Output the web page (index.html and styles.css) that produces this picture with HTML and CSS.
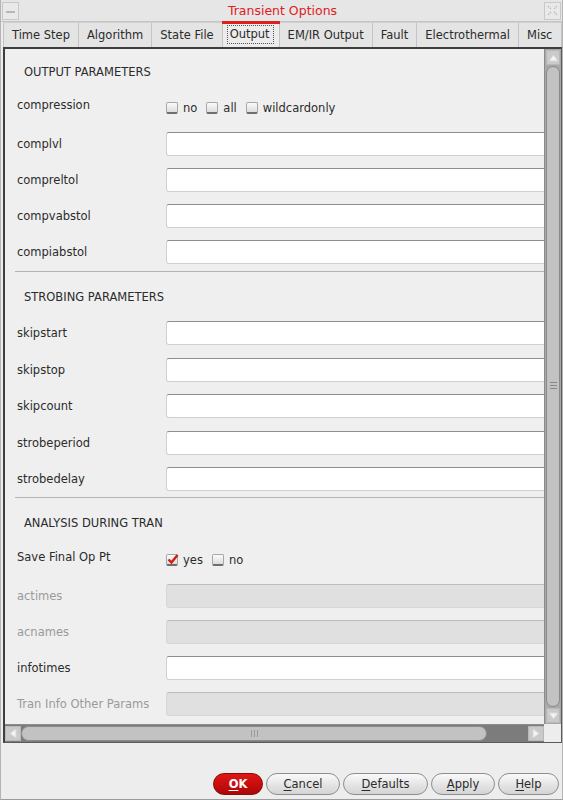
FILE: index.html
```html
<!DOCTYPE html>
<html>
<head>
<meta charset="utf-8">
<link rel="stylesheet" href="styles.css">
</head>
<body>
<div class="win">
  <div class="titlebar">
    <span class="tb-btn tb-min"><span class="dash"></span></span>
    <span class="title">Transient Options</span>
    <span class="tb-btn tb-close">
      <svg width="11" height="11" viewBox="0 0 11 11"><path d="M1 1L4 4M7 7L10 10M10 1L7 4M4 7L1 10" stroke="#b8b8b8" stroke-width="1.3" stroke-dasharray="1.5 1"/></svg>
    </span>
  </div>

  <div class="tabs">
    <div class="tab">Time Step</div>
    <div class="tab">Algorithm</div>
    <div class="tab">State File</div>
    <div class="tab active"><span class="focus">Output</span></div>
    <div class="tab">EM/IR Output</div>
    <div class="tab">Fault</div>
    <div class="tab">Electrothermal</div>
    <div class="tab tab-last">Misc</div>
  </div>

  <div class="panel">
    <div class="viewport">
      <div class="content">
        <section class="sec sec-first">
          <div class="hdr">OUTPUT PARAMETERS</div>
          <div class="rows">
            <div class="row row-check">
              <span class="lbl">compression</span>
              <div class="opts">
                <label class="opt"><span class="cb"></span>no</label>
                <label class="opt"><span class="cb"></span>all</label>
                <label class="opt"><span class="cb"></span>wildcardonly</label>
              </div>
            </div>
            <div class="row"><span class="lbl">complvl</span><span class="field"></span></div>
            <div class="row"><span class="lbl">compreltol</span><span class="field"></span></div>
            <div class="row"><span class="lbl">compvabstol</span><span class="field"></span></div>
            <div class="row"><span class="lbl">compiabstol</span><span class="field"></span></div>
          </div>
        </section>

        <section class="sec sec-strobe">
          <div class="hdr">STROBING PARAMETERS</div>
          <div class="rows">
            <div class="row"><span class="lbl">skipstart</span><span class="field"></span></div>
            <div class="row"><span class="lbl">skipstop</span><span class="field"></span></div>
            <div class="row"><span class="lbl">skipcount</span><span class="field"></span></div>
            <div class="row"><span class="lbl">strobeperiod</span><span class="field"></span></div>
            <div class="row"><span class="lbl">strobedelay</span><span class="field"></span></div>
          </div>
        </section>

        <section class="sec sec-last">
          <div class="hdr">ANALYSIS DURING TRAN</div>
          <div class="rows">
            <div class="row row-check">
              <span class="lbl">Save Final Op Pt</span>
              <div class="opts">
                <label class="opt"><span class="cb checked"><svg width="12" height="11" viewBox="0 0 12 11"><path d="M1.5 5.5L4.5 8.5L10.5 1" fill="none" stroke="#d21a1a" stroke-width="2.4"/></svg></span>yes</label>
                <label class="opt"><span class="cb"></span>no</label>
              </div>
            </div>
            <div class="row"><span class="lbl dis">actimes</span><span class="field field-dis"></span></div>
            <div class="row"><span class="lbl dis">acnames</span><span class="field field-dis"></span></div>
            <div class="row"><span class="lbl">infotimes</span><span class="field"></span></div>
            <div class="row"><span class="lbl dis">Tran Info Other Params</span><span class="field field-dis"></span></div>
          </div>
        </section>
      </div>
    </div>

    <div class="vscroll">
      <span class="arrow arrow-up"><svg width="11" height="8" viewBox="0 0 11 8"><path d="M5.5 1L10 7H1Z" fill="#f4f4f4" stroke="#d8d8d8"/></svg></span>
      <span class="vthumb"><span class="grip-v"></span></span>
      <span class="arrow arrow-down"><svg width="11" height="8" viewBox="0 0 11 8"><path d="M5.5 7L10 1H1Z" fill="#f4f4f4" stroke="#d8d8d8"/></svg></span>
    </div>

    <div class="hscroll">
      <span class="harrow"><svg width="8" height="11" viewBox="0 0 8 11"><path d="M1 5.5L7 1V10Z" fill="#f4f4f4" stroke="#d8d8d8"/></svg></span>
      <span class="hthumb"><span class="grip-h"></span></span>
      <span class="htrack"></span>
      <span class="harrow"><svg width="8" height="11" viewBox="0 0 8 11"><path d="M7 5.5L1 1V10Z" fill="#f4f4f4" stroke="#d8d8d8"/></svg></span>
    </div>
    <div class="corner"></div>
  </div>

  <div class="footer">
    <button class="btn btn-ok"><u>O</u>K</button>
    <button class="btn btn-cancel"><u>C</u>ancel</button>
    <button class="btn btn-defaults"><u>D</u>efaults</button>
    <button class="btn btn-apply"><u>A</u>pply</button>
    <button class="btn btn-help"><u>H</u>elp</button>
  </div>
</div>
</body>
</html>
```

FILE: styles.css
```css
* { box-sizing: border-box; }

html, body {
  margin: 0;
  padding: 0;
  background: #ececec;
}

body {
  font-family: "DejaVu Sans", "Liberation Sans", sans-serif;
  font-size: 11.5px;
  color: #2b2b2b;
}

.win {
  width: 563px;
  height: 800px;
  background: #ededed;
  border-left: 1px solid #b4b4b4;
  border-right: 1px solid #b4b4b4;
  border-bottom: 1px solid #9c9c9c;
  position: relative;
}

/* title bar */
.titlebar {
  height: 22px;
  display: flex;
  align-items: center;
  justify-content: space-between;
  padding: 0 1px 0 1px;
  background: #e6e6e6;
  border-bottom: 1px solid #c4c4c4;
}

.title {
  color: #e0201c;
  font-size: 12.5px;
  line-height: 20px;
  margin-left: 2px;
}

.tb-btn {
  width: 17px;
  height: 18px;
  border: 1px solid #c8c8c8;
  background: #e9e9e9;
  display: flex;
  align-items: center;
  justify-content: center;
}

.dash {
  width: 9px;
  height: 2px;
  background: #b6b6b6;
  margin-top: 2px;
}

/* tabs */
.tabs {
  display: flex;
  height: 25px;
  margin-left: 2px;
}

.tab {
  height: 25px;
  padding: 0 8px;
  display: flex;
  align-items: center;
  background: #e4e4e4;
  border-top: 1px solid #d0d0d0;
  border-left: 1px solid #c4c4c4;
  color: #2b2b2b;
  white-space: nowrap;
}

.tab-last {
  flex: 1;
  border-right: 1px solid #c4c4c4;
}

.tab.active {
  background: #ececec;
  position: relative;
  padding: 0 5px 0 4px;
  border-top: none;
}

.tab.active::before {
  content: "";
  position: absolute;
  left: -1px;
  right: -1px;
  top: -1px;
  height: 3px;
  background: #e0201c;
}

.focus {
  border: 1px dotted #555;
  padding: 1px 3px 1px 2px;
  line-height: 15px;
}

/* panel */
.panel {
  margin-left: 2px;
  width: 559px;
  height: 696px;
  border-left: 2px solid #3e3e3e;
  border-top: 2px solid #3e3e3e;
  border-bottom: 1px solid #5a5a5a;
  border-right: 1px solid #5a5a5a;
  display: grid;
  grid-template-columns: 1fr 17px;
  grid-template-rows: 1fr 18px;
  background: #efefef;
}

.viewport {
  overflow: hidden;
  position: relative;
}

.content {
  padding-left: 12px;
}

.sec {
  border-bottom: 1px solid #b4b4b4;
  margin-left: -2px;
  padding-left: 2px;
}

.sec-last {
  border-bottom: none;
}

.hdr {
  line-height: 16px;
  padding: 17px 0 14px 7px;
  color: #2b2b2b;
}

.sec-first .hdr {
  padding-top: 15px;
  padding-bottom: 13px;
}

.sec-strobe .hdr {
  padding-bottom: 16px;
}

.rows {
  display: flex;
  flex-direction: column;
  gap: 12px;
}

.sec-first .rows { padding-bottom: 7px; }
.sec-strobe .rows { gap: 12.5px; padding-bottom: 6px; }

.row {
  display: flex;
  align-items: center;
  height: 24px;
}

.row-check {
  height: 27px;
  align-items: flex-start;
}

.lbl {
  width: 149px;
  flex: none;
  line-height: 24px;
  white-space: nowrap;
}

.lbl.dis {
  color: #9a9a9a;
}

.field {
  flex: none;
  width: 400px;
  height: 24px;
  background: #ffffff;
  border: 1px solid #cfcfcf;
  border-top-color: #8e8e8e;
  border-radius: 3px;
}

.field-dis {
  background: #e0e0e0;
  border-color: #d6d6d6;
  border-top-color: #bdbdbd;
}

.opts {
  display: flex;
  gap: 9px;
  margin-top: 6px;
  line-height: 18px;
}

.opt {
  display: flex;
  align-items: center;
  gap: 5px;
  color: #2b2b2b;
}

.cb {
  width: 12px;
  height: 12px;
  border: 1px solid #a8a8a8;
  border-bottom: 2px solid #6e6e6e;
  border-radius: 2px;
  background: linear-gradient(#fbfbfb, #dcdcdc);
  display: flex;
  align-items: center;
  justify-content: center;
  position: relative;
}

.cb.checked svg {
  position: absolute;
  left: 0;
  top: -1px;
}

/* scrollbars */
.vscroll {
  background: #a9a9a9;
  border-left: 1px solid #8c8c8c;
  display: flex;
  flex-direction: column;
  padding: 1px;
}

.arrow {
  height: 15px;
  flex: none;
  display: flex;
  align-items: center;
  justify-content: center;
  background: #cacaca;
  border: 1px solid #b8b8b8;
}

.vthumb {
  flex: 1;
  margin: 1px 0;
  background: #c2c2c2;
  border: 1px solid #8a8a8a;
  border-radius: 7px;
  display: flex;
  align-items: center;
  justify-content: center;
}

.grip-v {
  width: 7px;
  height: 7px;
  border-top: 1px solid #888;
  border-bottom: 1px solid #888;
  background: linear-gradient(#888, #888) center / 7px 1px no-repeat;
  margin-top: -2px;
}

.hscroll {
  background: #7c7c7c;
  border-top: 1px solid #8c8c8c;
  display: flex;
  padding: 1px 0;
}

.harrow {
  width: 16px;
  flex: none;
  display: flex;
  align-items: center;
  justify-content: center;
  background: #cacaca;
  border: 1px solid #b8b8b8;
}

.hthumb {
  width: 466px;
  flex: none;
  background: #c2c2c2;
  border: 1px solid #8a8a8a;
  border-radius: 8px;
  display: flex;
  align-items: center;
  justify-content: center;
}

.grip-h {
  width: 7px;
  height: 7px;
  border-left: 1px solid #999;
  border-right: 1px solid #999;
  background: linear-gradient(#999, #999) center / 1px 7px no-repeat;
}

.htrack {
  flex: 1;
}

.corner {
  background: #ededed;
}

/* footer */
.footer {
  display: flex;
  justify-content: flex-end;
  gap: 3px;
  padding: 30px 3px 0 0;
}

.btn {
  height: 22px;
  font-family: "DejaVu Sans", "Liberation Sans", sans-serif;
  font-size: 11.5px;
  color: #2b2b2b;
  border: 1px solid #8e8e8e;
  border-radius: 11px;
  background: linear-gradient(#fafafa, #e2e2e2 60%, #d4d4d4);
  padding: 0;
  display: flex;
  align-items: center;
  justify-content: center;
}

.btn u {
  text-underline-offset: 2px;
}

.btn-ok {
  width: 50px;
  background: linear-gradient(#e01616, #c40c0c 60%, #a80808);
  border-color: #8c0a0a;
  color: #ffffff;
  font-weight: bold;
}

.btn-cancel { width: 74px; }
.btn-defaults { width: 85px; }
.btn-apply { width: 64px; }
.btn-help { width: 61px; }
```
